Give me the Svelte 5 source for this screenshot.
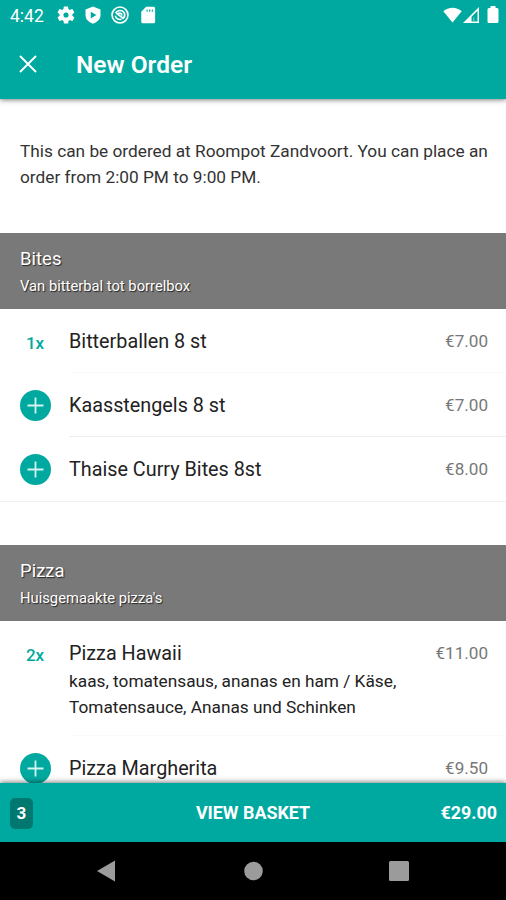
<script>
    let sections = $state([
        {
            title: 'Bites',
            subtitle: 'Van bitterbal tot borrelbox',
            items: [
                { name: 'Bitterballen 8 st', price: 7, count: 1 },
                { name: 'Kaasstengels 8 st', price: 7, count: 0 },
                { name: 'Thaise Curry Bites 8st', price: 8, count: 0 }
            ]
        },
        {
            title: 'Pizza',
            subtitle: "Huisgemaakte pizza's",
            items: [
                {
                    name: 'Pizza Hawaii',
                    description: 'kaas, tomatensaus, ananas en ham / Käse, Tomatensauce, Ananas und Schinken',
                    price: 11,
                    count: 2
                },
                { name: 'Pizza Margherita', price: 9.5, count: 0 }
            ]
        }
    ]);

    let items = $derived(sections.flatMap((section) => section.items));
    let count = $derived(items.reduce((sum, item) => sum + item.count, 0));
    let total = $derived(items.reduce((sum, item) => sum + item.count * item.price, 0));

    const euro = (value) => '€' + value.toFixed(2);
</script>

<div class="screen">
    <header class="top">
        <div class="status">
            <span class="time">4:42</span>
            <svg class="gear" width="18" height="18" viewBox="1.500 1.500 21 21">
                <path fill-rule="evenodd" d="M19.400 13a7.500 7.500 0 0 0 0-2l2.100-1.600c.2-.2.3-.4.1-.6l-2-3.500c-.1-.2-.4-.3-.6-.2l-2.500 1a7.300 7.300 0 0 0-1.700-1l-.4-2.600c0-.3-.2-.5-.5-.5h-4c-.3 0-.5.2-.5.500L9 5.100a7.700 7.700 0 0 0-1.700 1l-2.500-1c-.2-.1-.5 0-.6.2l-2 3.500c-.1.2-.1.500.1.600L4.500 11a7.500 7.500 0 0 0 0 2l-2.100 1.600c-.2.1-.3.4-.1.600l2 3.500c.1.200.4.300.6.200l2.500-1c.5.400 1.100.7 1.700 1l.4 2.600c0 .3.200.5.500.5h4c.3 0 .5-.2.500-.5l.4-2.600a7.300 7.300 0 0 0 1.700-1l2.500 1c.2.100.5 0 .6-.2l2-3.500c.1-.2.1-.5-.1-.6zM12 15a3 3 0 1 1 0-6 3 3 0 0 1 0 6z" />
            </svg>
            <svg class="shield" width="18" height="18" viewBox="0 0 24 24">
                <path fill-rule="evenodd" d="M12 .5 2 4.500V12c0 5.500 4 9.500 10 11.500 6-2 10-6 10-11.500V4.500zM9 7.500l7.500 4.500L9 16.500z" />
            </svg>
            <svg class="swirl" width="18" height="18" viewBox="0 0 24 24">
                <g fill="none" stroke="#fff" stroke-width="2.200">
                    <circle cx="12" cy="12" r="10.600" />
                    <path d="M6 9.500C8 5.500 14.500 4.500 17.300 8.500c1.500 2.500 1 5.500-.3 7.500M5.800 13c.5 3.500 4.200 5.800 8.200 4.600M9 10.500c2-1.800 5.500-.8 5.500 2M7 9.500l10 7.500" />
                </g>
            </svg>
            <svg class="sd" width="18" height="18" viewBox="0 0 24 24">
                <path fill-rule="evenodd" d="M19.500 1h-10L3 7.500V21a2 2 0 0 0 2 2h14.500a2 2 0 0 0 2-2V3a2 2 0 0 0-2-2zM10 4.500h1.500v3H10zm3.500 0H15v3h-1.500zm3.500 0h1.500v3H17z" />
            </svg>
            <span class="spacer"></span>
            <svg class="wifi" width="19" height="16" viewBox="0 0 19 16">
                <path d="M.3 4.200C5.500-.5 13.500-.5 18.700 4.200L9.500 15.500z" />
            </svg>
            <svg class="signal" width="16" height="16" viewBox="0 0 16 16">
                <path fill-rule="evenodd" d="M0 16 16 0v16zM8.500 9.800v4.700h6V3.800z" />
                <path d="M10 10.500h1.500V14H10z" opacity=".3" />
            </svg>
            <svg class="battery" width="12" height="18" viewBox="0 0 12 18">
                <path d="M3.500 0h5v2H10a1.500 1.500 0 0 1 1.500 1.500v12A1.500 1.500 0 0 1 10 17H2a1.500 1.500 0 0 1-1.500-1.500v-12A1.500 1.500 0 0 1 2 2h1.500z" />
            </svg>
        </div>
        <div class="bar">
            <button class="close" aria-label="Close">
                <svg width="18" height="18" viewBox="0 0 18 18">
                    <path d="M1 1l16 16M17 1L1 17" stroke="#fff" stroke-width="1.900" />
                </svg>
            </button>
            <h1>New Order</h1>
        </div>
    </header>

    <main>
        <p class="intro">This can be ordered at Roompot Zandvoort. You can place an order from 2:00 PM to 9:00 PM.</p>

        {#each sections as section}
            <section>
                <div class="section-head">
                    <h2>{section.title}</h2>
                    <p>{section.subtitle}</p>
                </div>
                <ul>
                    {#each section.items as item}
                        <li class:selected={item.count > 0}>
                            <button class="add" aria-label={item.name} onclick={() => item.count++}>
                                {#if item.count}
                                    <span class="count">{item.count}x</span>
                                {:else}
                                    <svg width="32" height="32" viewBox="0 0 32 32">
                                        <circle cx="16.500" cy="16.500" r="15.500" fill="#00a9a0" />
                                        <path d="M16.500 8.500v16M8.500 16.500h16" stroke="#d5f3f0" stroke-width="1.800" />
                                    </svg>
                                {/if}
                            </button>
                            <div class="item">
                                <div class="line">
                                    <span class="name">{item.name}</span>
                                    <span class="price">{euro(item.price)}</span>
                                </div>
                                {#if item.description}
                                    <p class="description">{item.description}</p>
                                {/if}
                            </div>
                        </li>
                    {/each}
                </ul>
            </section>
        {/each}
    </main>

    <footer class="basket">
        <span class="badge">{count}</span>
        <span class="label">VIEW BASKET</span>
        <span class="total">{euro(total)}</span>
    </footer>

    <nav>
        <svg width="20" height="22" viewBox="0 0 20 22"><path d="M18 .5v21L0 11z" /></svg>
        <svg width="20" height="20" viewBox="0 0 20 20"><circle cx="10.500" cy="10" r="9.300" /></svg>
        <svg width="20" height="20" viewBox="0 0 20 20"><rect width="20" height="20" rx="1.500" /></svg>
    </nav>
</div>

<style>
    :global(body) {
        margin: 0;
        background: #fff;
    }
    .screen {
        height: 900px;
        display: flex;
        flex-direction: column;
        overflow: hidden;
        font-family: Roboto, "Liberation Sans", sans-serif;
        color: #222;
    }
    h1, h2, p, ul {
        margin: 0;
        padding: 0;
        font-weight: 400;
    }
    button {
        border: 0;
        padding: 0;
        background: none;
        font: inherit;
        cursor: pointer;
    }
    svg {
        display: block;
        flex: none;
    }
    .top {
        flex: none;
        height: 99px;
        background: #00a9a0;
        color: #fff;
        box-shadow: 0 1px 5px rgba(0, 0, 0, 0.5);
        z-index: 1;
    }
    .status {
        height: 30px;
        display: flex;
        align-items: center;
        padding: 0 7px 0 10px;
        fill: #fff;
    }
    .time {
        width: 47px;
        font-size: 17.5px;
        line-height: 32px;
        padding-top: 1px;
    }
    .shield, .swirl {
        margin-left: 9px;
    }
    .sd {
        margin-left: 10px;
    }
    .spacer {
        flex: 1;
    }
    .battery {
        margin-left: 8px;
    }
    .wifi {
        margin-right: 1px;
    }
    .bar {
        height: 68px;
        display: flex;
        align-items: center;
    }
    .close {
        width: 76px;
        padding-left: 19px;
    }
    h1 {
        font-size: 24.5px;
        font-weight: 600;
    }
    main {
        flex: 1;
        min-height: 0;
        overflow: hidden;
    }
    .intro {
        padding: 39px 16px 43px 20px;
        font-size: 17.25px;
        line-height: 26px;
        color: #333;
    }
    section {
        margin-bottom: 43px;
    }
    .section-head {
        height: 76px;
        box-sizing: border-box;
        padding: 13px 20px 0;
        background: #797979;
        color: #fff;
        text-shadow: 1px 1px 1px rgba(0, 0, 0, 0.7);
    }
    h2 {
        font-size: 18.5px;
        line-height: 26px;
    }
    .section-head p {
        font-size: 14.75px;
        line-height: 28px;
    }
    ul {
        list-style: none;
        border-bottom: 1px solid #f0f0f0;
    }
    li {
        display: flex;
        padding-left: 19px;
    }
    .add {
        width: 32px;
        height: 64px;
        margin-right: 18px;
        display: flex;
        align-items: center;
        justify-content: center;
    }
    .count {
        color: #00a9a0;
        font-size: 17px;
        font-weight: 500;
        padding-top: 4px;
    }
    .item {
        flex: 1;
        padding-right: 18px;
        border-bottom: 1px solid #eee;
    }
    .selected .item {
        border-bottom-color: #fafafa;
    }
    li:last-child .item {
        border-bottom-color: transparent;
    }
    .line {
        height: 63px;
        display: flex;
        align-items: center;
        justify-content: space-between;
    }
    .name {
        padding-top: 1px;
        font-size: 19.8px;
    }
    .price {
        color: #777;
        font-size: 17.1px;
    }
    .description {
        width: 350px;
        margin-top: -16px;
        padding-bottom: 15px;
        font-size: 17.25px;
        line-height: 26px;
    }
    .basket {
        flex: none;
        height: 59px;
        display: grid;
        grid-template-columns: 1fr auto 1fr;
        align-items: center;
        padding: 0 9px;
        background: #00a9a0;
        color: #fff;
        font-size: 17.9px;
        font-weight: 700;
        box-shadow: 0 -1px 5px rgba(0, 0, 0, 0.5);
        z-index: 1;
    }
    .badge {
        width: 23px;
        margin: 2px 0 0 1px;
        border-radius: 5px;
        background: #00776f;
        font-size: 17px;
        line-height: 31px;
        text-align: center;
    }
    .total {
        text-align: right;
    }
    nav {
        flex: none;
        height: 58px;
        display: flex;
        align-items: center;
        justify-content: space-between;
        box-sizing: border-box;
        padding: 0 97px;
        background: #000;
        fill: #9b9b9b;
        z-index: 1;
    }
</style>
